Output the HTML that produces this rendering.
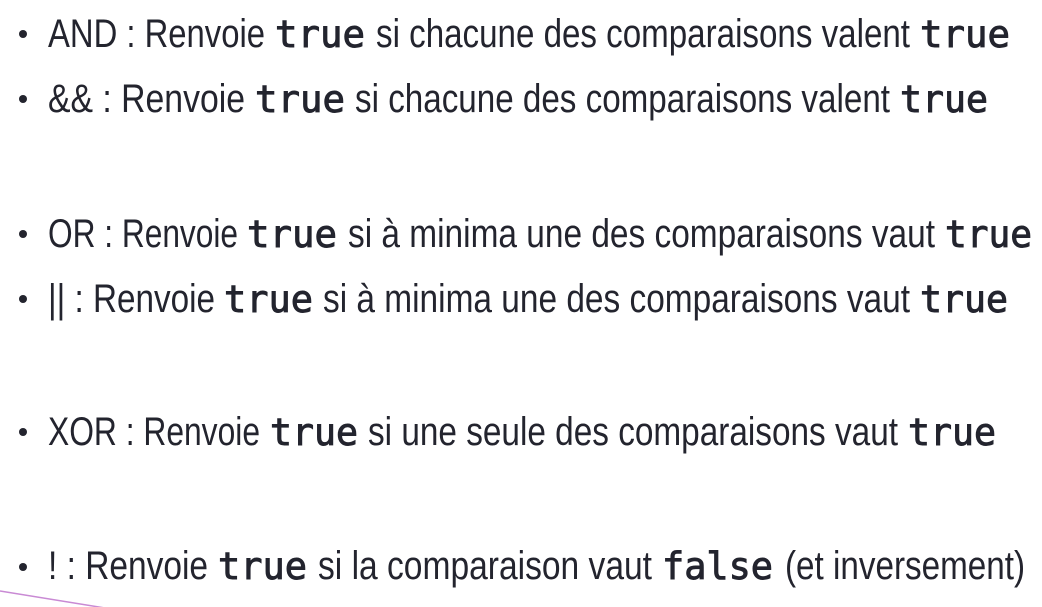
<!DOCTYPE html>
<html><head><meta charset="utf-8"><style>
html,body{margin:0;padding:0;background:#fff;width:1042px;height:607px;overflow:hidden}
svg{display:block}
.s{font-family:"Liberation Sans",sans-serif;font-size:40px;fill:#23242e}
.m{font-family:"DejaVu Sans Mono",monospace;font-size:37px;font-weight:normal;fill:#23242e;stroke:#23242e;stroke-width:0.9}
</style></head><body>
<svg width="1042" height="607" viewBox="0 0 1042 607">
<g fill="#23242e">
<circle cx="23" cy="34" r="4"/><circle cx="23" cy="99" r="4"/><circle cx="23" cy="234" r="4"/>
<circle cx="23" cy="299" r="4"/><circle cx="23" cy="432" r="4"/><circle cx="23" cy="567" r="4"/>
</g>
<text class="s" x="48" y="47" textLength="217" lengthAdjust="spacingAndGlyphs">AND : Renvoie</text>
<text class="m" x="275" y="47" textLength="90" lengthAdjust="spacingAndGlyphs">true</text>
<text class="s" x="376" y="47" textLength="534" lengthAdjust="spacingAndGlyphs">si chacune des comparaisons valent</text>
<text class="m" x="920" y="47" textLength="90" lengthAdjust="spacingAndGlyphs">true</text>

<text class="s" x="48" y="112" textLength="197" lengthAdjust="spacingAndGlyphs">&amp;&amp; : Renvoie</text>
<text class="m" x="255" y="112" textLength="90" lengthAdjust="spacingAndGlyphs">true</text>
<text class="s" x="355" y="112" textLength="535" lengthAdjust="spacingAndGlyphs">si chacune des comparaisons valent</text>
<text class="m" x="900" y="112" textLength="88" lengthAdjust="spacingAndGlyphs">true</text>

<text class="s" x="48" y="247" textLength="190" lengthAdjust="spacingAndGlyphs">OR : Renvoie</text>
<text class="m" x="247" y="247" textLength="90" lengthAdjust="spacingAndGlyphs">true</text>
<text class="s" x="348" y="247" textLength="587" lengthAdjust="spacingAndGlyphs">si à minima une des comparaisons vaut</text>
<text class="m" x="945" y="247" textLength="87" lengthAdjust="spacingAndGlyphs">true</text>

<text class="s" x="48" y="312" textLength="167" lengthAdjust="spacingAndGlyphs">|| : Renvoie</text>
<text class="m" x="224" y="312" textLength="89" lengthAdjust="spacingAndGlyphs">true</text>
<text class="s" x="323" y="312" textLength="587" lengthAdjust="spacingAndGlyphs">si à minima une des comparaisons vaut</text>
<text class="m" x="920" y="312" textLength="88" lengthAdjust="spacingAndGlyphs">true</text>

<text class="s" x="48" y="445" textLength="212" lengthAdjust="spacingAndGlyphs">XOR : Renvoie</text>
<text class="m" x="270" y="445" textLength="88" lengthAdjust="spacingAndGlyphs">true</text>
<text class="s" x="368" y="445" textLength="530" lengthAdjust="spacingAndGlyphs">si une seule des comparaisons vaut</text>
<text class="m" x="908" y="445" textLength="88" lengthAdjust="spacingAndGlyphs">true</text>

<text class="s" x="48" y="579" textLength="160" lengthAdjust="spacingAndGlyphs">! : Renvoie</text>
<text class="m" x="218" y="579" textLength="89" lengthAdjust="spacingAndGlyphs">true</text>
<text class="s" x="318" y="579" textLength="334" lengthAdjust="spacingAndGlyphs">si la comparaison vaut</text>
<text class="m" x="662" y="579" textLength="111" lengthAdjust="spacingAndGlyphs">false</text>
<text class="s" x="785" y="579" textLength="240" lengthAdjust="spacingAndGlyphs">(et inversement)</text>

<line x1="0" y1="591" x2="105" y2="608" stroke="#c98ad4" stroke-width="1.5"/>
</svg>
</body></html>
